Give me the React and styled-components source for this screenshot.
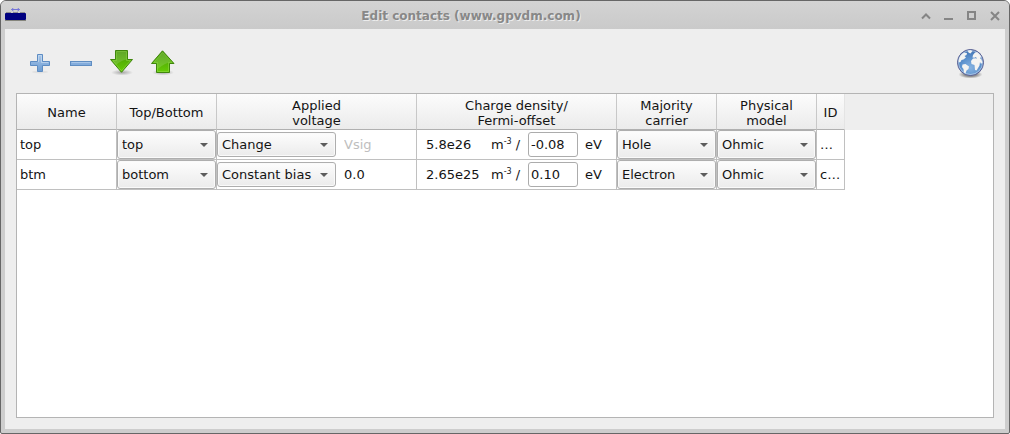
import React from "react";
import styled, { createGlobalStyle } from "styled-components";

const Global = createGlobalStyle`
  *, *::before, *::after { box-sizing: border-box; }
  body {
    margin: 0;
    font-family: "DejaVu Sans", Verdana, sans-serif;
    font-size: 13px;
    line-height: 15px;
    color: #141414;
    background: #fff;
  }
  button, input, select { font: inherit; color: inherit; margin: 0; }
`;

const Window = styled.div`
  display: flex;
  flex-direction: column;
  min-height: 100vh;
  padding: 0 4px 4px;
  border: 1px solid #666;
  border-radius: 6px 6px 2px 2px;
  background: #cdcdcd;
`;

const TitleBar = styled.header`
  display: grid;
  grid-template-columns: 28px 1fr 96px;
  align-items: center;
  height: 28px;
  margin: 0 -4px;
  padding: 2px 4px 0;
  border-radius: 5px 5px 0 0;
  background: linear-gradient(#d3d3d3, #cacaca);
`;

const Title = styled.h1`
  margin: 0;
  text-align: center;
  font-size: 12px;
  line-height: 16px;
  font-weight: bold;
  color: #888;
  text-shadow: 1px 1px 0 #ececec;
`;

const WindowButtons = styled.div`
  display: flex;
  justify-content: flex-end;
  gap: 7px;
  padding-right: 2px;
`;

const IconButton = styled.button`
  display: block;
  padding: 0;
  border: 0;
  background: none;
  line-height: 0;
  svg { display: block; }
`;

const Content = styled.main`
  flex: 1;
  display: flex;
  flex-direction: column;
  padding: 0 11px 11px;
  background: #eee;
`;

const Toolbar = styled.div`
  display: flex;
  align-items: center;
  gap: 9px;
  height: 64px;
  padding: 6px 8px 0;
`;

const Spacer = styled.div`
  flex: 1;
`;

const TableFrame = styled.section`
  flex: 1;
  border: 1px solid #b4b4b4;
  background: linear-gradient(#eee, #eee) 0 0 / 100% 36px no-repeat #fff;
`;

const Table = styled.table`
  width: 828px;
  table-layout: fixed;
  border-collapse: separate;
  border-spacing: 0;
`;

const HeadCell = styled.th`
  width: ${(p) => p.$width}px;
  height: 36px;
  padding: 2px 0 0;
  border-right: 1px solid ${(p) => (p.$last ? "#e4e4e4" : "#c8c8c8")};
  border-bottom: 1px solid #b0b0b0;
  background: linear-gradient(#fcfcfc, #ebebeb);
  font-weight: normal;
  text-align: center;
  white-space: pre-line;
`;

const Cell = styled.td`
  height: 30px;
  padding: 0 ${(p) => (p.$text ? 3 : 0)}px;
  border-right: 1px solid #c0c0c0;
  border-bottom: 1px solid #c0c0c0;
  background: #fff;
  white-space: nowrap;
  overflow: hidden;
`;

const CellRow = styled.div`
  display: flex;
  align-items: center;
  height: 29px;
`;

const SelectBox = styled.div`
  position: relative;
  width: ${(p) => (p.$compact ? "119px" : "100%")};
  height: ${(p) => (p.$compact ? 25 : 29)}px;
  &::after {
    content: "";
    position: absolute;
    right: 8px;
    top: calc(50% - 2px);
    border: 4px solid transparent;
    border-top-color: #5c5c5c;
    border-bottom: 0;
    pointer-events: none;
  }
`;

const Select = styled.select`
  appearance: none;
  display: block;
  width: 100%;
  height: 100%;
  padding: 0 16px 0 4px;
  border: 1px solid #aeaeae;
  border-radius: 3px;
  background: linear-gradient(#fdfdfd, #ebebeb);
  box-shadow: inset 0 0 0 1px #fafafa;
`;

const PlainInput = styled.input`
  width: ${(p) => p.$width}px;
  height: 25px;
  padding: 0;
  margin-left: ${(p) => p.$indent}px;
  border: 0;
  background: none;
  &:disabled { color: #bebebe; }
`;

const BoxInput = styled.input`
  width: 50px;
  height: 25px;
  padding: 0 2px;
  border: 1px solid #acacac;
  border-radius: 3px;
  background: #fff;
`;

const Unit = styled.span`
  width: ${(p) => p.$width}px;
  sup {
    font-size: 8px;
    line-height: 0;
    vertical-align: 5px;
  }
`;

const EnergyUnit = styled.span`
  margin-left: 7px;
`;

function Dropdown({ label, value, options, compact }) {
  return (
    <SelectBox $compact={compact}>
      <Select aria-label={label} defaultValue={value}>
        {options.map((o) => (
          <option key={o}>{o}</option>
        ))}
      </Select>
    </SelectBox>
  );
}

function DeviceLogo() {
  return (
    <svg width="22" height="16" viewBox="0 0 22 16" aria-hidden="true">
      <path d="M6.500 1.500h8M8.500 0l-2 1.500 2 1.500M12.500 0l2 1.500-2 1.500" fill="none" stroke="#7373d8" />
      <path d="M1 4h5v2H1zM8 4h5v2H8zM15 4h5v2h-5z" fill="#8c8c92" />
      <path d="M0 12h21v1H0z" fill="#85857c" />
      <rect x="0" y="5" width="21" height="7" rx="1" fill="#000080" />
    </svg>
  );
}

function PlusIcon() {
  return (
    <svg width="32" height="32" viewBox="0 0 32 32" aria-hidden="true">
      <defs>
        <linearGradient id="blue" x1="0" y1="0" x2="0" y2="1">
          <stop offset="0" stopColor="#a9c6e8" />
          <stop offset="1" stopColor="#6c9dd3" />
        </linearGradient>
      </defs>
      <ellipse cx="16" cy="24" rx="8" ry="1.500" fill="#000" opacity=".05" />
      <path d="M13.500 6.500h5v7h7v4h-7v6h-5v-6h-7v-4h7z" fill="url(#blue)" stroke="#5d8cc3" />
      <path d="M14.500 14V7.500h3v7h7" fill="none" stroke="#c8dcf1" opacity=".7" />
    </svg>
  );
}

function MinusIcon() {
  return (
    <svg width="32" height="32" viewBox="0 0 32 32" aria-hidden="true">
      <rect x="5.500" y="13.500" width="21" height="4" fill="#83acdc" stroke="#5f8dc2" />
      <path d="M6.500 14.500h19" stroke="#a8c6e8" />
    </svg>
  );
}

function ArrowIcon({ up }) {
  const shape = up ? "M15.500 2.800L27 15.500H22.500V24.500H9.500V15.500H4.500z" : "M9.500 2.500h12v9h5L15.500 24.300 4.500 11.500h5z";
  const rim = up ? "M15.500 4.500L25 14.500H21.500V23.500H10.500V14.500H6.700z" : "M10.500 3.500h10v9h4L15.500 22.800 6.700 12.500h3.800z";
  const shine = up ? "M15.500 4.500l8.500 9.500q-6 1-13.500 7v-6.500H7z" : "M10.500 3.500h10v8q-6 1-10.500 5.500l-3.500-4.500h4z";
  const id = up ? "greenUp" : "greenDown";
  return (
    <svg width="32" height="32" viewBox="0 0 32 32" aria-hidden="true">
      <defs>
        <linearGradient id={id} x1="0" y1="0" x2="0" y2="1">
          <stop offset="0" stopColor="#459607" />
          <stop offset="1" stopColor="#66cc05" />
        </linearGradient>
        <radialGradient id={id + "Shadow"}>
          <stop offset="0" stopOpacity=".3" />
          <stop offset="1" stopOpacity="0" />
        </radialGradient>
      </defs>
      <ellipse cx="16" cy="24.500" rx="11" ry="3" fill={`url(#${id}Shadow)`} />
      <path d={shape} fill={`url(#${id})`} stroke="#3f860c" />
      <path d={shine} fill="#fff" opacity=".14" />
      <path d={rim} fill="none" stroke="#a5e364" opacity=".4" />
    </svg>
  );
}

function GlobeIcon() {
  return (
    <svg width="32" height="32" viewBox="0 0 32 32" aria-hidden="true">
      <defs>
        <radialGradient id="ocean" cx=".5" cy=".7" r=".7">
          <stop offset="0" stopColor="#86b3e1" />
          <stop offset=".5" stopColor="#5f94cf" />
          <stop offset="1" stopColor="#3f72b2" />
        </radialGradient>
        <radialGradient id="globeShadow">
          <stop offset=".5" stopOpacity=".4" />
          <stop offset="1" stopOpacity="0" />
        </radialGradient>
      </defs>
      <ellipse cx="16.500" cy="26.500" rx="12" ry="4" fill="url(#globeShadow)" />
      <circle cx="16.500" cy="14.500" r="13" fill="url(#ocean)" stroke="#5c5f91" />
      <g fill="#f4f4f2">
        <path d="M4.500 13C5 9 7 6 10 4.500l3 .500-.500 2-2 1 1.500 1.500-2.500 2-2 .500-1 2-1.500.500z" />
        <path d="M8.500 16.500l3-.500 3.500 2.500-.500 2.500-2 1.500-1 3-1.500-.500-.500-4-1.500-2z" />
        <path d="M13.500 2.500l3-.500 2 1-2 2.500-1.800-.700z" />
        <path d="M18.500 9.500l.500-2.500 2-2.500 2-.500c2 1 3.500 3 4.500 5l-1.500 1 1.500 1.500 1 3-1.500 1.500-1-2-.500 3.500-1.500 2.500-1.500 2.500-1.500-.500-.500-5-3-1-.500-3 2-2.500 3-.200 1 .800-1-2-1.500.700z" />
      </g>
      <circle cx="16.500" cy="14.500" r="12" fill="none" stroke="#d8e5f4" opacity=".55" />
    </svg>
  );
}

const WINDOW_ACTIONS = [
  ["Roll up", "M4 10.500l4-4 4 4"],
  ["Minimize", "M3 11h9"],
  ["Maximize", "M4 4h7v7H4z"],
  ["Close", "M4 4l8 8M12 4l-8 8"],
];

const COLUMNS = [
  ["Name", 100],
  ["Top/Bottom", 100],
  ["Applied\nvoltage", 200],
  ["Charge density/\nFermi-offset", 200],
  ["Majority\ncarrier", 100],
  ["Physical\nmodel", 100],
  ["ID", 28],
];

const CONTACTS = [
  { name: "top", side: "top", mode: "Change", voltage: "Vsig", locked: true, density: "5.8e26", offset: "-0.08", carrier: "Hole", model: "Ohmic", id: "…" },
  { name: "btm", side: "bottom", mode: "Constant bias", voltage: "0.0", locked: false, density: "2.65e25", offset: "0.10", carrier: "Electron", model: "Ohmic", id: "c…" },
];

export default function App() {
  return (
    <>
      <Global />
      <Window>
        <TitleBar>
          <DeviceLogo />
          <Title>Edit contacts (www.gpvdm.com)</Title>
          <WindowButtons>
            {WINDOW_ACTIONS.map(([label, d]) => (
              <IconButton key={label} type="button" aria-label={label}>
                <svg width="16" height="16" viewBox="0 0 16 16" aria-hidden="true">
                  <path d={d} fill="none" stroke="#858585" strokeWidth="2" />
                </svg>
              </IconButton>
            ))}
          </WindowButtons>
        </TitleBar>
        <Content>
          <Toolbar>
            <IconButton type="button" aria-label="Add contact"><PlusIcon /></IconButton>
            <IconButton type="button" aria-label="Remove contact"><MinusIcon /></IconButton>
            <IconButton type="button" aria-label="Move down"><ArrowIcon /></IconButton>
            <IconButton type="button" aria-label="Move up"><ArrowIcon up /></IconButton>
            <Spacer />
            <IconButton type="button" aria-label="Help"><GlobeIcon /></IconButton>
          </Toolbar>
          <TableFrame>
            <Table>
              <thead>
                <tr>
                  {COLUMNS.map(([label, width]) => (
                    <HeadCell key={label} scope="col" $width={width} $last={label === "ID"}>{label}</HeadCell>
                  ))}
                </tr>
              </thead>
              <tbody>
                {CONTACTS.map((c) => (
                  <tr key={c.name}>
                    <Cell $text>{c.name}</Cell>
                    <Cell>
                      <Dropdown label="Top/Bottom" value={c.side} options={["top", "bottom"]} />
                    </Cell>
                    <Cell>
                      <CellRow>
                        <Dropdown compact label="Applied voltage type" value={c.mode} options={["Change", "Constant bias"]} />
                        <PlainInput aria-label="Applied voltage" defaultValue={c.voltage} disabled={c.locked} $width={68} $indent={8} />
                      </CellRow>
                    </Cell>
                    <Cell>
                      <CellRow>
                        <PlainInput aria-label="Charge density" defaultValue={c.density} $width={65} $indent={9} />
                        <Unit $width={37}>m<sup>-3</sup> /</Unit>
                        <BoxInput aria-label="Fermi offset" defaultValue={c.offset} />
                        <EnergyUnit>eV</EnergyUnit>
                      </CellRow>
                    </Cell>
                    <Cell>
                      <Dropdown label="Majority carrier" value={c.carrier} options={["Hole", "Electron"]} />
                    </Cell>
                    <Cell>
                      <Dropdown label="Physical model" value={c.model} options={["Ohmic", "Schottky"]} />
                    </Cell>
                    <Cell $text>{c.id}</Cell>
                  </tr>
                ))}
              </tbody>
            </Table>
          </TableFrame>
        </Content>
      </Window>
    </>
  );
}
